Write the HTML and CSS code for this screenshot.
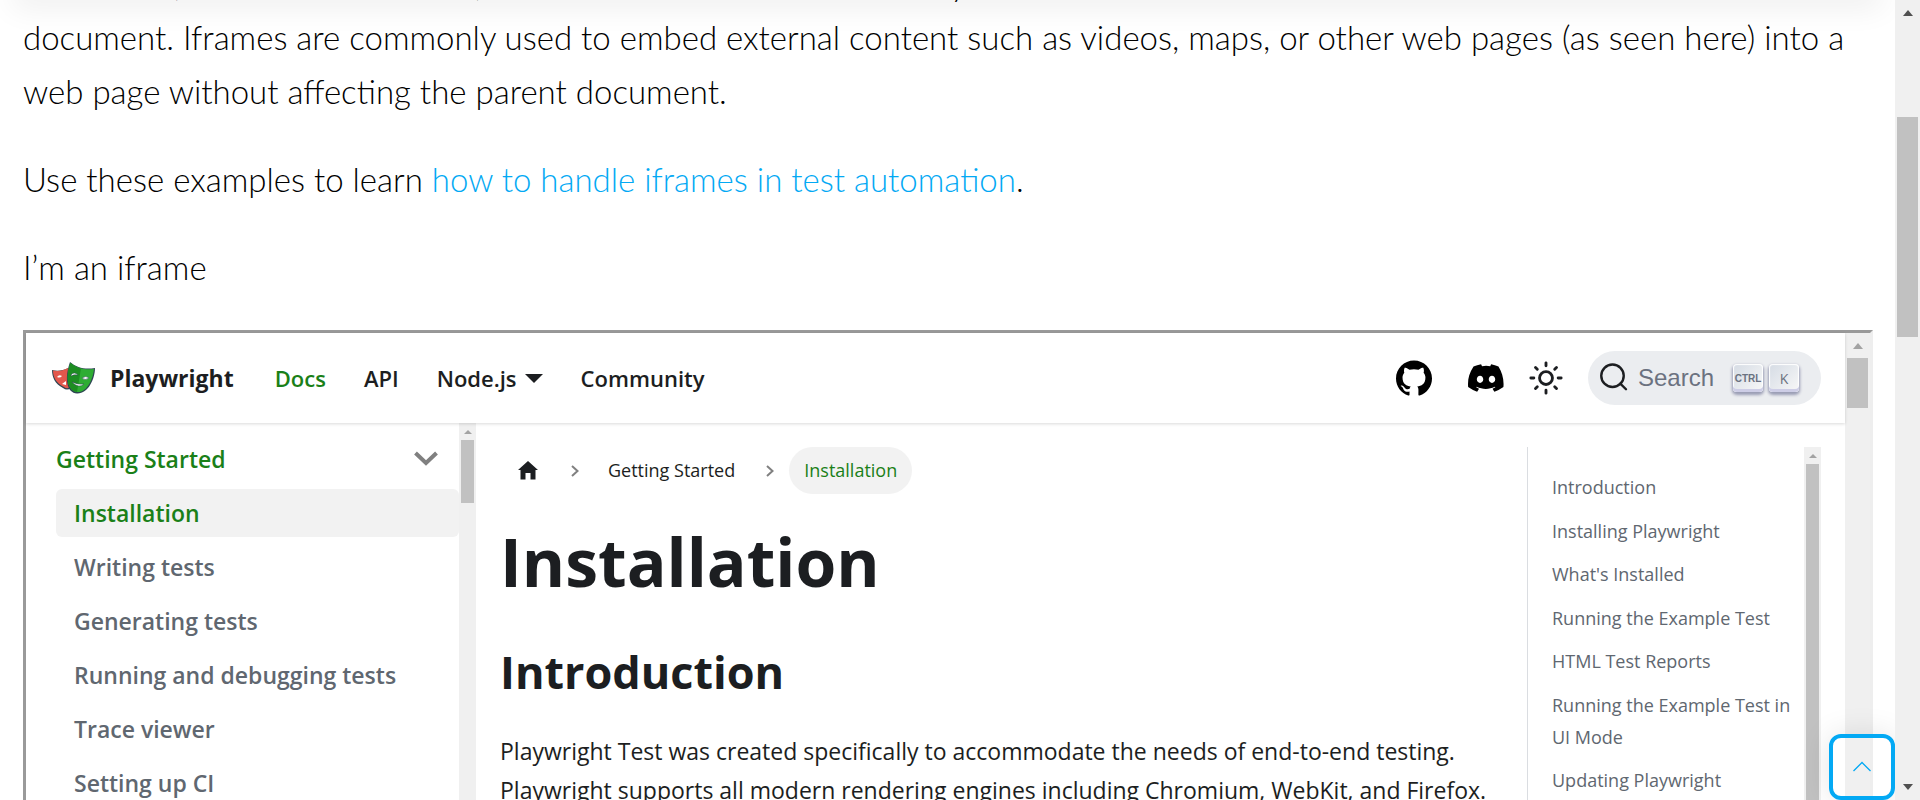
FILE: index.html
```html
<!DOCTYPE html>
<html lang="en">
<head>
<meta charset="utf-8">
<title>Iframes</title>
<link rel="stylesheet" href="styles.css">
</head>
<body>
<div class="page">
  <main class="content">
    <div class="header-shadow"></div>
    <article class="article">
      <p>An iframe (short for inline frame) is an HTML element that allows you to embed another document within the current<br>document. Iframes are commonly used to embed external content such as videos, maps, or other web pages (as seen here) into a<br>web page without affecting the parent document.</p>
      <p>Use these examples to learn <a class="article-link" href="#">how to handle iframes in test automation</a>.</p>
      <p>I’m an iframe</p>
    </article>

    <section class="frame">
      <div class="docs">
        <header class="navbar">
          <a class="brand" href="#">
            <svg class="logo" viewBox="0 0 43 32" aria-hidden="true">
              <path d="M0 8C6 9.500 11 8.500 16 6L19 26Q15 29 11 26C3 22 0 15 0 8Z" fill="#2d4552"/>
              <path d="M1 8.500C6 9.500 11 8.500 16 6L18 25Q15 27.500 12 25C4 21 1 15 1 8.500Z" fill="#e2574c"/>
              <path d="M5 15Q7 12 10 14Q8 16.500 5 15ZM10 22L14 19V23Z" fill="#fff"/>
              <path d="M18 0C25 6 33 7.500 43 6C43 17 36 32 25 31.500C15 31 12 17 18 0Z" fill="#2d4552"/>
              <path d="M18.500 1C25 6.500 33 8 42 7C41 17 35 31 25 30C16 29 13 16 18.500 1Z" fill="#2ead33"/>
              <path d="M18.500 1C22 4 25 5.500 29 6.500L25 30C16 29 13 16 18.500 1Z" fill="#1d8d22"/>
              <path d="M19 13Q22 9 26 13Q22 12 19 14ZM30 16Q34 13 37 16Q33 19 30 16ZM20 20Q26 23 32 22Q27 27 20 20Z" fill="#fff" stroke="#2d4552" stroke-width=".5"/>
            </svg>
            <b>Playwright</b>
          </a>
          <nav class="nav-links">
            <a class="active" href="#">Docs</a>
            <a href="#">API</a>
            <a class="dropdown" href="#">Node.js</a>
            <a href="#">Community</a>
          </nav>
          <div class="nav-tools">
            <a href="#" aria-label="GitHub"><svg width="36" height="36" viewBox="0 0 24 24"><path d="M12 .297c-6.630 0-12 5.373-12 12 0 5.303 3.438 9.800 8.205 11.385.6.113.82-.258.82-.577 0-.285-.01-1.040-.015-2.040-3.338.724-4.042-1.610-4.042-1.610C4.422 18.070 3.633 17.700 3.633 17.700c-1.087-.744.084-.729.084-.729 1.205.084 1.838 1.236 1.838 1.236 1.070 1.835 2.809 1.305 3.495.998.108-.776.417-1.305.76-1.605-2.665-.3-5.466-1.332-5.466-5.930 0-1.310.465-2.380 1.235-3.220-.135-.303-.54-1.523.105-3.176 0 0 1.005-.322 3.300 1.230.96-.267 1.980-.399 3-.405 1.020.006 2.040.138 3 .405 2.280-1.552 3.285-1.230 3.285-1.230.645 1.653.24 2.873.12 3.176.765.840 1.230 1.910 1.230 3.220 0 4.610-2.805 5.625-5.475 5.920.42.360.81 1.096.81 2.220 0 1.606-.015 2.896-.015 3.286 0 .315.210.690.825.570C20.565 22.092 24 17.592 24 12.297c0-6.627-5.373-12-12-12"/></svg></a>
            <a href="#" aria-label="Discord"><svg width="36" height="36" viewBox="0 0 24 24"><path d="M20.317 4.370a19.790 19.790 0 0 0-4.885-1.515c-.21.375-.444.865-.608 1.250a18.270 18.270 0 0 0-5.487 0c-.164-.394-.406-.875-.618-1.250A19.740 19.740 0 0 0 3.677 4.370C.533 9.046-.32 13.580.1 18.058a19.900 19.900 0 0 0 5.993 3.030c.462-.63.874-1.295 1.226-1.994a13.100 13.100 0 0 1-1.872-.892l.372-.292c3.928 1.793 8.180 1.793 12.062 0l.373.292a12.300 12.300 0 0 1-1.873.892c.36.698.772 1.362 1.225 1.993a19.840 19.840 0 0 0 6.002-3.030c.5-5.177-.838-9.674-3.291-13.687zM8.020 15.331c-1.183 0-2.157-1.086-2.157-2.419s.956-2.419 2.157-2.419c1.210 0 2.176 1.095 2.157 2.419 0 1.333-.956 2.419-2.157 2.419zm7.975 0c-1.183 0-2.157-1.086-2.157-2.419s.955-2.419 2.157-2.419c1.210 0 2.176 1.095 2.157 2.419 0 1.333-.946 2.419-2.157 2.419z"/></svg></a>
            <button class="theme-toggle" type="button" aria-label="Switch theme"><svg width="36" height="36" viewBox="0 0 24 24" fill="none" stroke="#1c1e21" stroke-width="1.900" stroke-linecap="round"><circle cx="12" cy="12" r="4.300"/><path d="M12 1.900v2M12 20.100v2M1.900 12h2M20.100 12h2M5 5l1.200 1.200M17.800 17.800L19 19M19 5l-1.200 1.200M6.200 17.800L5 19"/></svg></button>
            <button class="search" type="button">
              <svg width="30" height="30" viewBox="0 0 20 20" fill="none" stroke="#1c1e21" stroke-width="1.600" stroke-linecap="round"><circle cx="9" cy="8.500" r="7.500"/><path d="M14.200 13.700L18 17.500"/></svg>
              <span class="search-label">Search</span>
              <kbd class="key key-ctrl">CTRL</kbd><kbd class="key">K</kbd>
            </button>
          </div>
        </header>

        <div class="columns">
          <aside class="sidebar">
            <ul class="menu">
              <li><a class="category" href="#">Getting Started <svg width="24" height="16" viewBox="0 0 24 16" fill="none" stroke="#808080" stroke-width="4"><path d="M1.500 2L12 12L22.500 2"/></svg></a></li>
              <li><a class="item current" href="#">Installation</a></li>
              <li><a class="item" href="#">Writing tests</a></li>
              <li><a class="item" href="#">Generating tests</a></li>
              <li><a class="item" href="#">Running and debugging tests</a></li>
              <li><a class="item" href="#">Trace viewer</a></li>
              <li><a class="item" href="#">Setting up CI</a></li>
            </ul>
            <div class="bar bar-small"><i class="arrow"></i><i class="thumb thumb-menu"></i></div>
          </aside>

          <div class="doc">
            <nav class="crumbs">
              <a class="home" href="#" aria-label="Home"><svg width="20" height="19" viewBox="0 0 20 19"><path d="M10 0L20 9H17.500V18.500H12.500V12H7.500V18.500H2.500V9H0Z" fill="#1c1e21"/></svg></a>
              <svg class="sep" width="8" height="12" viewBox="0 0 8 12"><path d="M1 1L6.500 6L1 11"/></svg>
              <a class="crumb" href="#">Getting Started</a>
              <svg class="sep" width="8" height="12" viewBox="0 0 8 12"><path d="M1 1L6.500 6L1 11"/></svg>
              <span class="crumb-active">Installation</span>
            </nav>
            <h1>Installation</h1>
            <h2>Introduction</h2>
            <p>Playwright Test was created specifically to accommodate the needs of end-to-end testing.<br>Playwright supports all modern rendering engines including Chromium, WebKit, and Firefox.</p>
          </div>

          <aside class="toc">
            <ul>
              <li><a href="#">Introduction</a></li>
              <li><a href="#">Installing Playwright</a></li>
              <li><a href="#">What's Installed</a></li>
              <li><a href="#">Running the Example Test</a></li>
              <li><a href="#">HTML Test Reports</a></li>
              <li><a href="#">Running the Example Test in UI Mode</a></li>
              <li><a href="#">Updating Playwright</a></li>
            </ul>
            <div class="bar bar-small"><i class="arrow"></i><i class="thumb"></i></div>
          </aside>
        </div>
      </div>
      <div class="bar"><i class="arrow"></i><i class="thumb thumb-frame"></i></div>
    </section>

    <button class="to-top" type="button" aria-label="Back to top"><svg width="20" height="12" viewBox="0 0 20 12" fill="none" stroke="#03a9f4" stroke-width="1.300"><path d="M1.500 10L10 1.500L18.500 10"/></svg></button>
  </main>
  <div class="bar bar-page"><i class="arrow"></i><i class="thumb thumb-page"></i><i class="arrow arrow-down"></i></div>
</div>
</body>
</html>
```

FILE: styles.css
```css
* { box-sizing: border-box; }

body {
  margin: 0;
  background: #fff;
  color: #1c1e21;
  font-family: "Open Sans", "Noto Sans", sans-serif;
  font-size: 23px;
}

a { color: inherit; text-decoration: none; }
ul { margin: 0; padding: 0; list-style: none; }
svg { display: block; flex: none; }
button { border: 0; padding: 0; background: none; font: inherit; }

.page { display: flex; height: 100vh; overflow: hidden; }

.content {
  position: relative;
  flex: 1;
  min-width: 0;
  display: flex;
  flex-direction: column;
  overflow: hidden;
}

.header-shadow {
  position: absolute;
  top: -10px;
  left: 20px;
  right: 20px;
  height: 10px;
  box-shadow: 0 0 30px 8px rgba(0, 0, 0, .07);
}

/* Article */
.article {
  margin-top: -44px;
  padding: 0 22px 0 23px;
  color: #000;
  font-family: Lato, sans-serif;
  font-size: 33px;
  font-weight: 300;
  line-height: 54px;
  white-space: nowrap;
}
.article p { margin: 0 0 34px; }
.article-link { color: #03a9f4; }

/* Scrollbars */
.bar {
  display: flex;
  flex-direction: column;
  flex: none;
  width: 25px;
  padding: 10px 2px 0;
  background: #f0f0f0;
}
.arrow {
  align-self: center;
  flex: none;
  border: 5px solid transparent;
  border-top-width: 0;
  border-bottom: 6px solid #a3a3a3;
}
.thumb { flex: 1; margin-top: 9px; background: #c1c1c1; }
.thumb-frame { flex: none; height: 50px; }
.thumb-menu { flex: none; height: 63px; }
.bar-small { width: 17px; padding-top: 7px; }
.bar-small .arrow { border-width: 0 4px 4px; }
.bar-small .thumb { margin-top: 6px; }
.bar-page .arrow { border-bottom-color: #505050; }
.bar-page .arrow-down { margin: auto 0 10px; transform: rotate(180deg); }
.thumb-page { flex: none; height: 220px; margin-top: 101px; }

/* Embedded documentation */
.frame {
  flex: 1;
  min-height: 0;
  display: flex;
  margin: 2px 22px 0 23px;
  border: 3px solid #9a9a9a;
  border-right-color: #eee;
  border-bottom: 0;
}
.docs { flex: 1; min-width: 0; display: flex; flex-direction: column; }

.navbar {
  position: relative;
  flex: none;
  display: flex;
  align-items: center;
  height: 90px;
  padding: 0 24px 0 26px;
  box-shadow: 0 1px 3px rgba(0, 0, 0, .15);
}
.brand { display: flex; align-items: center; gap: 15px; margin-right: 41px; }
.logo { width: 43px; height: 32px; }
.nav-links { display: flex; gap: 38px; font-size: 22px; font-weight: 600; }
.nav-links .active { color: #1a8018; }
.dropdown { display: flex; align-items: center; gap: 8px; }
.dropdown::after {
  content: "";
  border: 9px solid transparent;
  border-top-color: #1c1e21;
  border-bottom: 0;
}
.nav-tools { display: flex; align-items: center; margin-left: auto; }
.nav-tools a { margin-right: 36px; }
.nav-tools .theme-toggle { margin: 0 24px 0 -12px; }
.search {
  display: flex;
  align-items: center;
  height: 54px;
  padding: 0 22px 0 11px;
  border-radius: 27px;
  background: #ebedf0;
  color: #6b7280;
}
.search-label { margin: 0 19px 0 9px; font: 24px "Liberation Sans", sans-serif; }
.key {
  display: flex;
  align-items: center;
  justify-content: center;
  width: 30px;
  height: 28px;
  margin-right: 6px;
  border-radius: 4px;
  background: linear-gradient(-225deg, #d5dbe4, #f8f8f8);
  box-shadow: inset 0 -3px #cdcde6, inset 0 0 1px 1px #fff, 0 2px 3px 1px rgba(30, 35, 90, .4);
  font: 14px "Open Sans", sans-serif;
}
.key:last-child { margin-right: 0; }
.key-ctrl { font: bold 10px "Liberation Sans", sans-serif; }

.columns { flex: 1; min-height: 0; display: flex; }
.sidebar { flex: none; width: 450px; display: flex; overflow: hidden; }
.menu { flex: 1; padding: 12px 0 0 30px; font-weight: 600; line-height: 48px; color: #606770; }
.menu li { margin-bottom: 6px; }
.menu a { display: flex; align-items: center; height: 48px; border-radius: 6px; }
.category { justify-content: space-between; padding-right: 21px; color: #1a8018; }
.menu .item { padding-left: 18px; }
.menu .current { background: #f2f2f2; color: #1a8018; }

.doc { flex: 1; min-width: 0; padding: 24px 24px 0; overflow: hidden; white-space: nowrap; }
.crumbs { display: flex; align-items: center; font-size: 18px; line-height: 47px; }
.home { margin: 0 33px 0 18px; }
.sep { fill: none; stroke: #808080; stroke-width: 2; }
.crumb { margin: 0 31px 0 29px; }
.crumb-active { margin-left: 15px; padding: 0 15px; border-radius: 24px; background: #f2f2f2; color: #1a8018; }
.doc h1 { margin: 22px 0 36px; font-size: 66px; line-height: 90px; }
.doc h2 { margin: 0 0 30px; font-size: 45px; line-height: 60px; }
.doc p { margin: 0; line-height: 39px; }

.toc {
  flex: none;
  display: flex;
  width: 294px;
  margin: 24px 24px 0 0;
  border-left: 1px solid #dadde1;
  overflow: hidden;
}
.toc ul { flex: 1; padding: 24px 0 0 24px; font-size: 18px; line-height: 32px; color: #606770; }
.toc li { margin-bottom: 12px; }
.toc li:nth-child(even) { margin-bottom: 11px; }

.to-top {
  position: absolute;
  right: 0;
  bottom: 0;
  display: flex;
  align-items: center;
  justify-content: center;
  width: 66px;
  height: 66px;
  border: 4px solid #03a9f4;
  border-radius: 12px;
  box-shadow: 0 0 30px rgba(0, 0, 0, .1);
}
```
